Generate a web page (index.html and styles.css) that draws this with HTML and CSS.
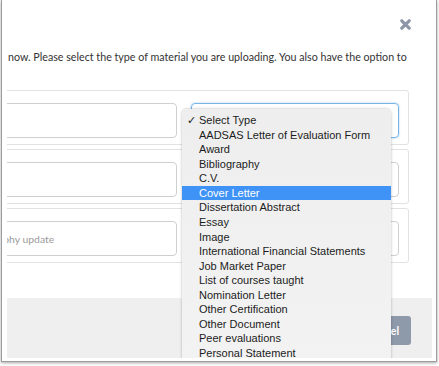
FILE: index.html
```html
<!DOCTYPE html>
<html>
<head>
<meta charset="utf-8">
<link rel="stylesheet" href="styles.css">
</head>
<body>
<div class="frame">
  <div class="viewport">
    <div class="modal">
      <div class="header">
        <button class="close" aria-label="Close">
          <svg width="11" height="11" viewBox="0 0 11 11"><path d="M1.8 1.8 L9.2 9.2 M9.2 1.8 L1.8 9.2" stroke="#8d97a8" stroke-width="3.2" stroke-linecap="round" fill="none"/></svg>
        </button>
      </div>
      <p class="intro">now. Please select the type of material you are uploading. You also have the option to</p>
      <div class="rows">
        <div class="row">
          <div class="field"></div>
          <div class="field select focus">Select Type</div>
        </div>
        <div class="row">
          <div class="field"></div>
          <div class="field select"></div>
        </div>
        <div class="row">
          <div class="field"><span class="ph">Biography update</span></div>
          <div class="field select"></div>
        </div>
      </div>
      <div class="footer">
        <button class="btn">Cancel</button>
      </div>
    </div>
    <ul class="menu">
      <li class="checked">Select Type</li>
      <li>AADSAS Letter of Evaluation Form</li>
      <li>Award</li>
      <li>Bibliography</li>
      <li>C.V.</li>
      <li class="active">Cover Letter</li>
      <li>Dissertation Abstract</li>
      <li>Essay</li>
      <li>Image</li>
      <li>International Financial Statements</li>
      <li>Job Market Paper</li>
      <li>List of courses taught</li>
      <li>Nomination Letter</li>
      <li>Other Certification</li>
      <li>Other Document</li>
      <li>Peer evaluations</li>
      <li>Personal Statement</li>
      <li>Publication</li>
    </ul>
  </div>
</div>
</body>
</html>
```

FILE: styles.css
```css
html, body {
  margin: 0;
  padding: 0;
  background: #ffffff;
  width: 439px;
  height: 366px;
  overflow: hidden;
}

.frame {
  margin-left: 1px;
  width: 425px;
  height: 358px;
  padding: 0 4px 3px 5px;
  border: 1px solid #9c9c9c;
  border-top: none;
  background: #ffffff;
  box-shadow: 0 1px 3px rgba(0, 0, 0, 0.35);
}

.viewport {
  position: relative;
  width: 425px;
  height: 358px;
  overflow: hidden;
}

.modal {
  margin-left: -79px;
  width: 504px;
  font-family: "Lato", "Open Sans", sans-serif;
  color: #333;
}

.header {
  height: 47px;
  display: flex;
  justify-content: flex-end;
  align-items: center;
  padding-right: 21px;
}

.close {
  border: 0;
  background: none;
  padding: 0;
  width: 11px;
  height: 11px;
  display: block;
  margin-top: 1px;
}
.close svg { display: block; }

.intro {
  margin: 0;
  padding-left: 80px;
  white-space: nowrap;
  font-size: 10.7px;
  line-height: 20px;
  color: #333333;
}

.rows {
  margin: 23px 23px 0 20px;
  display: flex;
  flex-direction: column;
  gap: 4px;
}

.row {
  height: 55px;
  box-sizing: border-box;
  border: 1px solid #e2e2e2;
  border-radius: 3px;
  padding: 12px 9px 0 12px;
  display: flex;
  gap: 14px;
}

.field {
  flex: 1;
  height: 35px;
  box-sizing: border-box;
  border: 1px solid #cfcfcf;
  border-radius: 4px;
  display: flex;
  align-items: center;
  padding: 0 12px;
  font-size: 10.4px;
}

.field.select {
  flex: 0 0 208px;
}

.field.focus {
  border-color: #79b6e8;
  box-shadow: 0 0 2px rgba(102, 175, 233, 0.7);
}

.ph {
  color: #9a9a9a;
}

.footer {
  margin-top: 35px;
  height: 80px;
  background: #efefef;
  display: flex;
  justify-content: flex-end;
  align-items: flex-start;
  padding: 18px 21px 0 0;
}

.btn {
  height: 29px;
  border: 0;
  border-radius: 3px;
  background: #8e99aa;
  color: #ffffff;
  font-family: "Lato", "Open Sans", sans-serif;
  font-weight: 700;
  font-size: 10.5px;
  padding: 0 12px;
}

.menu {
  position: absolute;
  left: 175px;
  top: 109px;
  width: 209px;
  height: 270px;
  margin: 0;
  padding: 4px 0 0 0;
  list-style: none;
  box-sizing: border-box;
  background: linear-gradient(#eeeeee, #f3f3f3);
  border-radius: 5px 5px 0 0;
  box-shadow: 0 0 3px rgba(0, 0, 0, 0.28);
  font-family: "Liberation Sans", Arial, sans-serif;
  font-size: 11px;
  color: #1c1c1c;
}

.menu li {
  height: 14.57px;
  line-height: 14.57px;
  padding-left: 17px;
  position: relative;
  white-space: nowrap;
}

.menu li.checked::before {
  content: "\2713";
  position: absolute;
  left: 5px;
  top: 0;
}

.menu li.active {
  background: #3f92f6;
  color: #ffffff;
}
```
